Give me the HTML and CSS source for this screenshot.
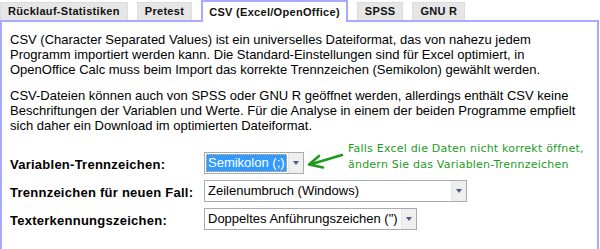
FILE: index.html
```html
<!DOCTYPE html>
<html lang="de">
<head>
    <meta charset="UTF-8">
    <title>Export: CSV (Excel/OpenOffice)</title>
    <link rel="stylesheet" href="styles.css">
</head>
<body>
    <!-- Tab bar -->
    <div class="tabs">
        <div class="tab">Rücklauf-Statistiken</div>
        <div class="tab">Pretest</div>
        <div class="tab active">CSV (Excel/OpenOffice)</div>
        <div class="tab">SPSS</div>
        <div class="tab">GNU R</div>
    </div>

    <div class="panel">
        <p>CSV (Character Separated Values) ist ein universelles Dateiformat, das von nahezu jedem
            Programm importiert werden kann. Die Standard-Einstellungen sind für Excel optimiert, in
            OpenOffice Calc muss beim Import das korrekte Trennzeichen (Semikolon) gewählt werden.</p>
        <p>CSV-Dateien können auch von SPSS oder GNU R geöffnet werden, allerdings enthält CSV keine
            Beschriftungen der Variablen und Werte. Für die Analyse in einem der beiden Programme empfielt
            sich daher ein Download im optimierten Dateiformat.</p>

        <!-- Export options -->
        <div class="options">
            <div class="row">
                <label class="label">Variablen-Trennzeichen:</label>
                <div class="select select-short">
                    <span class="value focused">Semikolon (;)</span>
                    <span class="button"></span>
                </div>
                <div class="callout">
                    <svg class="arrow" width="38" height="32" viewBox="0 0 38 32">
                        <path d="M36 14 L4 23.5 M13 15 L3 23.5 L17 26.5" fill="none" stroke="#1f9a1f" stroke-width="2.6" stroke-linecap="round" stroke-linejoin="round"/>
                    </svg>
                    <div class="note">Falls Excel die Daten nicht korrekt öffnet,<br>ändern Sie das Variablen-Trennzeichen</div>
                </div>
            </div>
            <div class="row">
                <label class="label">Trennzeichen für neuen Fall:</label>
                <div class="select select-long">
                    <span class="value">Zeilenumbruch (Windows)</span>
                    <span class="button"></span>
                </div>
            </div>
            <div class="row">
                <label class="label">Texterkennungszeichen:</label>
                <div class="select select-mid">
                    <span class="value">Doppeltes Anführungszeichen (")</span>
                    <span class="button"></span>
                </div>
            </div>
        </div>
    </div>
</body>
</html>
```

FILE: styles.css
```css
* {
    box-sizing: border-box;
}

body {
    margin: 0;
    width: 599px;
    font-family: "Liberation Sans", Arial, sans-serif;
    font-size: 13px;
    color: #000;
    background-color: #ffffff;
}

/* Tabs */
.tabs {
    display: flex;
    align-items: flex-end;
    gap: 9px;
    height: 20px;
}

.tab {
    height: 18px;
    padding: 0 7px;
    border: 1px solid #dcdcdc;
    border-bottom: none;
    background-color: #e6e6e6;
    font-size: 11px;
    font-weight: bold;
    letter-spacing: 0.3px;
    line-height: 17px;
    color: #111;
}

.tab.active {
    position: relative;
    z-index: 1;
    height: 22px;
    margin-bottom: -2px;
    padding: 0 6px;
    border: 2px solid #a8a8ff;
    border-bottom: none;
    background-color: #ffffff;
    line-height: 20px;
}

/* Panel */
.panel {
    border: 2px solid #a8a8ff;
    padding: 10px 8px 16px;
}

.panel p {
    margin: 0 0 11px;
    line-height: 15px;
}

.options {
    margin-top: 19px;
}

.row {
    display: flex;
    align-items: center;
    height: 22px;
    margin-bottom: 6px;
}

.label {
    width: 194px;
    padding-top: 2px;
    font-weight: bold;
    letter-spacing: 0.25px;
}

/* Drop-downs */
.select {
    display: flex;
    height: 22px;
    padding: 1px;
    border: 1px solid #a5acb2;
    background-color: #ffffff;
}

.select-short {
    width: 100px;
}

.select-mid {
    width: 213px;
}

.select-long {
    width: 263px;
}

.value {
    flex: 1;
    padding: 0 2px;
    line-height: 18px;
    white-space: nowrap;
    overflow: hidden;
}

.value.focused {
    background-color: #3399ff;
    color: #ffffff;
    outline: 1px dotted #f0c060;
    outline-offset: -1px;
}

.button {
    position: relative;
    width: 15px;
    margin: -1px -1px -1px 1px;
    border-left: 1px solid #e4e4e4;
    background-color: #efefef;
}

.button::after {
    content: "";
    position: absolute;
    left: 4px;
    top: 8px;
    border-left: 3.5px solid transparent;
    border-right: 3.5px solid transparent;
    border-top: 4px solid #4d5d7d;
}

/* Hint next to the first drop-down */
.callout {
    display: flex;
    align-self: flex-start;
    margin-top: -11px;
    margin-left: 2px;
}

.arrow {
    flex: none;
}

.note {
    margin-left: 4px;
    font-family: "DejaVu Sans", Verdana, sans-serif;
    font-size: 11px;
    letter-spacing: 0.22px;
    line-height: 16px;
    color: #1c9c1c;
}
```
